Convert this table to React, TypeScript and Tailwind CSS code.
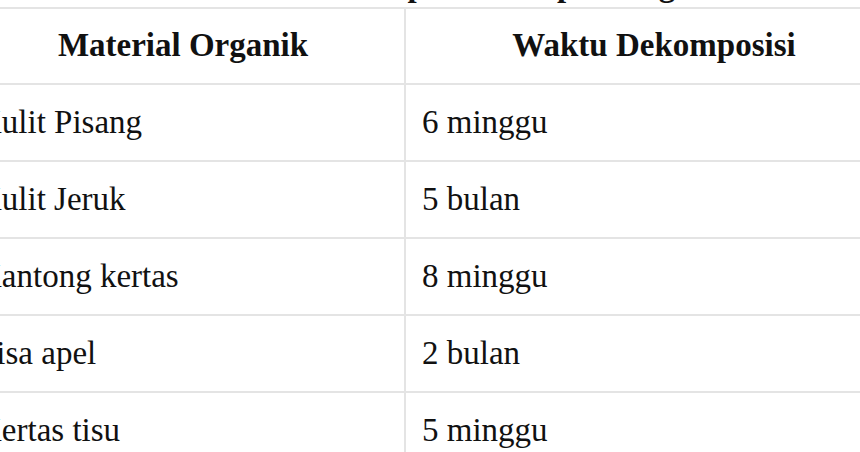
const ROWS = [
  ["Kulit Pisang", "6 minggu"],
  ["Kulit Jeruk", "5 bulan"],
  ["Kantong kertas", "8 minggu"],
  ["Sisa apel", "2 bulan"],
  ["Kertas tisu", "5 minggu"],
];

export default function App() {
  return (
    <div className="w-[860px] h-[452px] overflow-hidden bg-white text-[#111] font-['Liberation_Serif',serif]">
      {/* title, cropped at the top of the shot */}
      <div className="h-[7px] overflow-hidden">
        <div className="-mt-[31px] ml-[203px] whitespace-nowrap text-[33px] font-bold leading-none">
          Waktu Dekomposisi Sampah Organik
        </div>
      </div>

      <table className="-ml-[40px] w-[942px] table-fixed border-collapse text-[33px]">
        <colgroup>
          <col className="w-[444px]" />
          <col className="w-[498px]" />
        </colgroup>
        <thead>
          <tr>
            <th className="h-[76px] border-2 border-[#e4e4e4] text-center align-middle font-bold">
              Material Organik
            </th>
            <th className="h-[76px] border-2 border-[#e4e4e4] text-center align-middle font-bold">
              Waktu Dekomposisi
            </th>
          </tr>
        </thead>
        <tbody>
          {ROWS.map(([material, waktu]) => (
            <tr key={material}>
              <td className="h-[77px] border-2 border-[#e4e4e4] pl-[16px] align-middle whitespace-nowrap">
                {material}
              </td>
              <td className="h-[77px] border-2 border-[#e4e4e4] pl-[16px] align-middle whitespace-nowrap">
                {waktu}
              </td>
            </tr>
          ))}
        </tbody>
      </table>
    </div>
  );
}
